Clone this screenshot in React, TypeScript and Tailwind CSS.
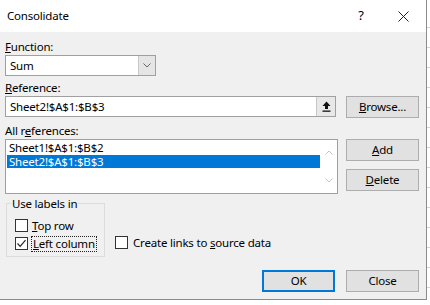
import React from "react";

const font = { fontFamily: '"Segoe UI", "Noto Sans", sans-serif' };

function Check({ checked }: { checked?: boolean }) {
    return (
        <div className="w-[13px] h-[13px] border border-[#333] bg-white flex items-center justify-center shrink-0">
            {checked && (
                <svg width="11" height="11" viewBox="0 0 11 11">
                    <path d="M1.5 5.5 L4.2 8.3 L9.5 2.2" fill="none" stroke="#222" strokeWidth="1.2" />
                </svg>
            )}
        </div>
    );
}

function Btn({ children, focus }: { children: React.ReactNode; focus?: boolean }) {
    return (
        <div
            className={
                "w-[73px] h-[22px] flex items-center justify-center bg-[#e1e1e1] text-black " +
                (focus ? "border-2 border-[#0078d7]" : "border border-[#adadad]")
            }
        >
            {children}
        </div>
    );
}

function App() {
    return (
        <div className="w-[430px] h-[305px] bg-white flex flex-col overflow-hidden text-black text-[11.5px] tracking-[-0.2px]" style={font}>
            <div className="flex">
                <div className="w-[427px] h-[300px] bg-[#f0f0f0] border-r border-b border-[#8c8c8c] flex flex-col">
                    {/* title bar */}
                    <div className="h-[32px] bg-white flex items-center pl-[7px]">
                        <span className="flex-1">Consolidate</span>
                        <span className="w-[20px] text-center mr-[27px] text-[13px]">?</span>
                        <svg width="11" height="11" viewBox="0 0 11 11" className="mr-[17px]">
                            <path d="M0.5 0.5 L10.5 10.5 M10.5 0.5 L0.5 10.5" stroke="#222" strokeWidth="1" />
                        </svg>
                    </div>

                    <div className="flex flex-col pl-[5px]">
                        <div className="h-[15px] leading-[15px] mt-[7px]">
                            <u>F</u>unction:
                        </div>
                        <div className="mt-[1px] w-[151px] h-[21px] border border-[#a0a0a0] bg-white flex">
                            <span className="flex-1 pl-[4px] leading-[19px]">Sum</span>
                            <div className="w-[17px] bg-[#e5e5e5] border-l border-[#c8c8c8] flex items-center justify-center">
                                <svg width="8" height="5" viewBox="0 0 8 5">
                                    <path d="M0.5 0.5 L4 4 L7.5 0.5" fill="none" stroke="#666" strokeWidth="1" />
                                </svg>
                            </div>
                        </div>

                        <div className="h-[15px] leading-[15px] mt-[4px]">
                            <u>R</u>eference:
                        </div>
                        <div className="mt-[1px] flex">
                            <div className="w-[331px] h-[21px] border border-[#a0a0a0] bg-white flex">
                                <span className="flex-1 pl-[4px] leading-[19px]">Sheet2!$A$1:$B$3</span>
                                <div className="w-[19px] bg-[#e8e8e8] border-l border-[#c8c8c8] flex items-center justify-center">
                                    <svg width="9" height="11" viewBox="0 0 9 11">
                                        <path d="M4.5 0.5 L8.5 5 L6 5 L6 8 L3 8 L3 5 L0.5 5 Z" fill="#111" />
                                        <rect x="0.5" y="9.5" width="8" height="1.3" fill="#111" />
                                    </svg>
                                </div>
                            </div>
                            <div className="ml-[10px]">
                                <Btn>
                                    <u>B</u>rowse...
                                </Btn>
                            </div>
                        </div>

                        <div className="h-[15px] leading-[15px] mt-[5px]">
                            All r<u>e</u>ferences:
                        </div>
                        <div className="mt-[1px] flex">
                            <div className="w-[333px] h-[55px] border border-[#a0a0a0] bg-white flex">
                                <div className="flex-1 flex flex-col pl-[1px] pt-[1px]">
                                    <div className="h-[14px] leading-[14px] pl-[2px]">Sheet1!$A$1:$B$2</div>
                                    <div className="h-[13px] leading-[13px] pl-[2px] bg-[#0078d7] text-white">Sheet2!$A$1:$B$3</div>
                                </div>
                                <div className="w-[17px] flex flex-col items-center justify-between py-[10px]">
                                    <svg width="8" height="5" viewBox="0 0 8 5">
                                        <path d="M0.5 4.5 L4 1 L7.5 4.5" fill="none" stroke="#c4c4c4" strokeWidth="1" />
                                    </svg>
                                    <svg width="8" height="5" viewBox="0 0 8 5">
                                        <path d="M0.5 0.5 L4 4 L7.5 0.5" fill="none" stroke="#c4c4c4" strokeWidth="1" />
                                    </svg>
                                </div>
                            </div>
                            <div className="ml-[8px] flex flex-col gap-[8px]">
                                <Btn>
                                    <u>A</u>dd
                                </Btn>
                                <Btn>
                                    <u>D</u>elete
                                </Btn>
                            </div>
                        </div>

                        <div className="mt-[9px] flex items-end">
                            <div className="relative ml-[1px] w-[99px] h-[54px] border border-[#dcdcdc] pl-[8px] pt-[15px] flex flex-col gap-[5px]">
                                <span className="absolute -top-[8px] left-[4px] px-[1px] bg-[#f0f0f0] leading-[15px]">Use labels in</span>
                                <div className="flex items-center gap-[4px] h-[13px]">
                                    <Check />
                                    <span>
                                        <u>T</u>op row
                                    </span>
                                </div>
                                <div className="flex items-center gap-[3px] h-[13px]">
                                    <Check checked />
                                    <span className="border border-dotted border-[#222] px-[1px] leading-[14px]">
                                        <u>L</u>eft column
                                    </span>
                                </div>
                            </div>
                            <div className="flex items-center gap-[5px] ml-[10px] mb-[6px]">
                                <Check />
                                <span>
                                    Create links to <u>s</u>ource data
                                </span>
                            </div>
                        </div>

                        <div className="mt-[13px] flex justify-end pr-[7px] gap-[11px]">
                            <Btn focus>OK</Btn>
                            <Btn>Close</Btn>
                        </div>
                    </div>
                </div>
                <div className="w-[3px] flex flex-col pt-[8px]">
                    {Array.from({ length: 15 }).map((_, i) => (
                        <div key={i} className="h-[20px] border-b border-[#d4d4d4]" />
                    ))}
                </div>
            </div>
            <div className="h-[5px] flex">
                <div className="w-[48px] border-r border-[#d4d4d4]" />
                <div className="w-[63px] border-r border-[#d4d4d4]" />
                <div className="w-[64px] border-r border-[#d4d4d4]" />
                <div className="w-[64px] border-r border-[#d4d4d4]" />
                <div className="w-[64px] border-r border-[#d4d4d4]" />
                <div className="w-[64px] border-r border-[#d4d4d4]" />
            </div>
        </div>
    );
}

export default App;
